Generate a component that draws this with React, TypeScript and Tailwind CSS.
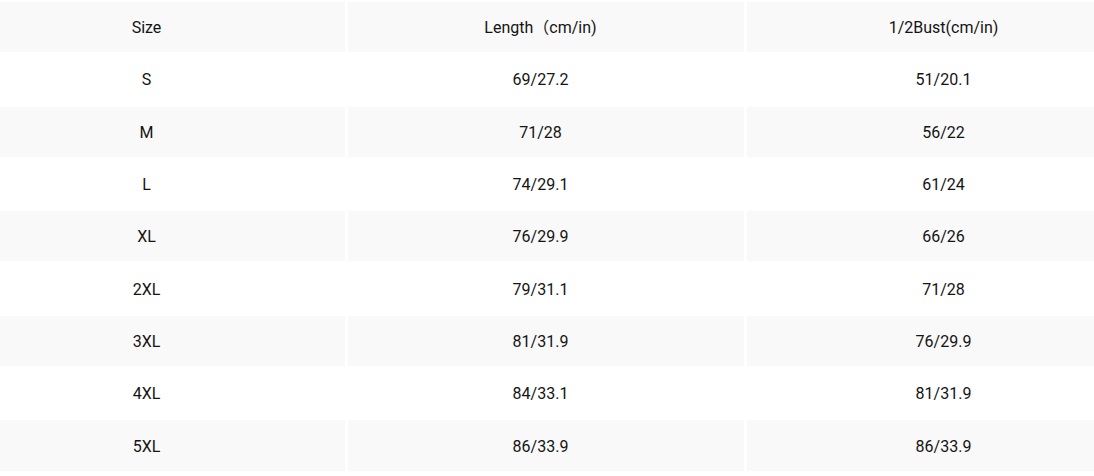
import React from "react";

// size chart rows: [size, length, half bust]
const rows: [string, string, string][] = [
  ["S", "69/27.2", "51/20.1"],
  ["M", "71/28", "56/22"],
  ["L", "74/29.1", "61/24"],
  ["XL", "76/29.9", "66/26"],
  ["2XL", "79/31.1", "71/28"],
  ["3XL", "81/31.9", "76/29.9"],
  ["4XL", "84/33.1", "81/31.9"],
  ["5XL", "86/33.9", "86/33.9"],
];

const Cell: React.FC<{ col: number; gray: boolean; children: React.ReactNode }> = ({
  col,
  gray,
  children,
}) => {
  const pad = col === 0 ? "pr-[52px]" : col === 1 ? "pr-[11px]" : "pl-[46px]";
  return (
    <div
      className={`flex h-[50.3px] items-center justify-center pt-[2px] ${pad} ${
        gray ? "bg-[#f9f9f9]" : "bg-white"
      }`}
    >
      {children}
    </div>
  );
};

const App: React.FC = () => {
  return (
    <div
      className="w-[1094px] h-[476px] overflow-hidden bg-white pt-[2px] text-[16px] text-[#141414]"
      style={{ fontFamily: 'Roboto, "Noto Sans CJK SC", sans-serif' }}
    >
      <div className="grid grid-cols-[345px_396px_347px] gap-x-[3px] gap-y-[2px]">
        {/* Header */}
        <Cell col={0} gray>
          Size
        </Cell>
        <Cell col={1} gray>
          Length（cm/in)
        </Cell>
        <Cell col={2} gray>
          1/2Bust(cm/in)
        </Cell>

        {rows.map(([size, len, bust], i) => {
          const gray = i % 2 === 1;
          return (
            <React.Fragment key={size}>
              <Cell col={0} gray={gray}>
                {size}
              </Cell>
              <Cell col={1} gray={gray}>
                {len}
              </Cell>
              <Cell col={2} gray={gray}>
                {bust}
              </Cell>
            </React.Fragment>
          );
        })}
      </div>
    </div>
  );
};

export default App;
